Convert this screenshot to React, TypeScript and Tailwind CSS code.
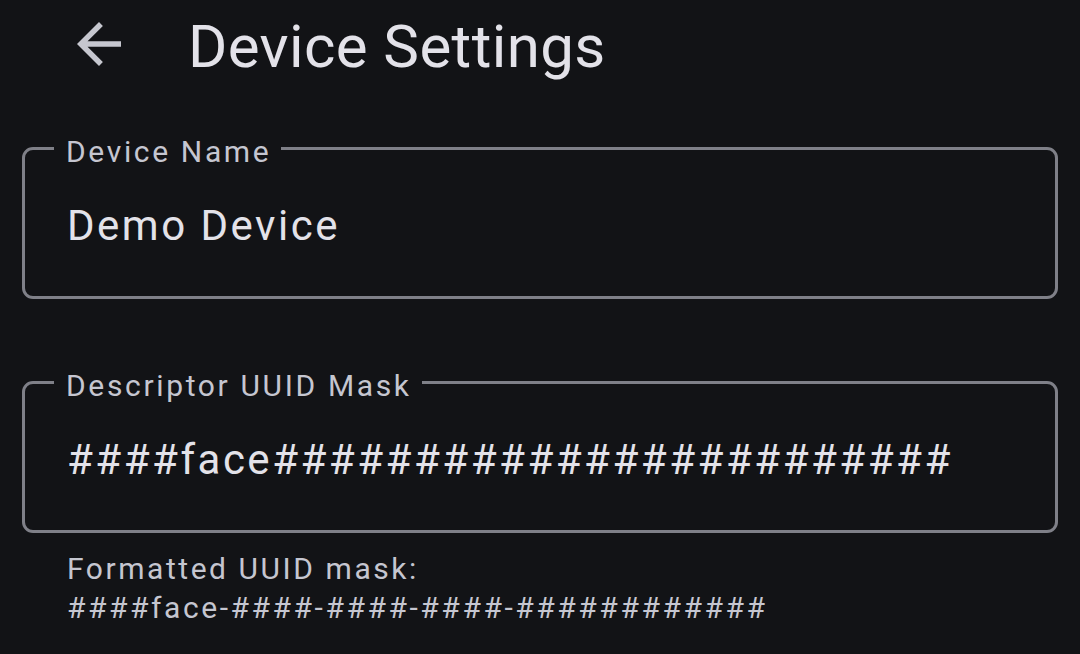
import React from 'react';

const font = { fontFamily: 'Roboto, "Noto Sans", sans-serif' };

const OutlinedField = ({ label, value }: { label: string; value: string }) => (
  <div className="relative h-[152px] rounded-[11px] border-[3px] border-[#7f8088] flex items-center px-[42px]">
    <span className="absolute left-[29px] -top-[15px] bg-[#121316] pl-[12px] pr-[10px] text-[30px] leading-[34px] tracking-[2.65px] text-[#c5c6d0]">
      {label}
    </span>
    <span className="text-[42px] leading-[50px] tracking-[2.5px] text-[#e3e2e9] pt-[5px]">{value}</span>
  </div>
);

const App: React.FC = () => {
  return (
    <div className="w-[1080px] h-[654px] bg-[#121316] overflow-hidden" style={font}>
      {/* Top bar */}
      <div className="h-[88px] flex items-center">
        <div className="w-[66px] h-[66px] ml-[66px] flex items-center justify-center">
          <svg width="66" height="66" viewBox="0 0 24 24" fill="#c6c7cf">
            <path d="M20 11H7.83l5.59-5.59L12 4l-8 8 8 8 1.41-1.41L7.83 13H20v-2z" />
          </svg>
        </div>
        <h1 className="ml-[56px] pt-[5px] text-[60px] leading-[60px] tracking-[0.4px] text-[#e3e2e9]">Device Settings</h1>
      </div>

      <div className="px-[22px] pt-[59px]">
        <OutlinedField label="Device Name" value="Demo Device" />
        <div className="h-[82px]" />
        <OutlinedField label="Descriptor UUID Mask" value="####face########################" />
        <div className="pl-[45px] pt-[16px] text-[30px] leading-[39px] tracking-[2.55px] text-[#c5c6d0]">
          <div>Formatted UUID mask:</div>
          <div>####face-####-####-####-############</div>
        </div>
      </div>
    </div>
  );
};

export default App;
